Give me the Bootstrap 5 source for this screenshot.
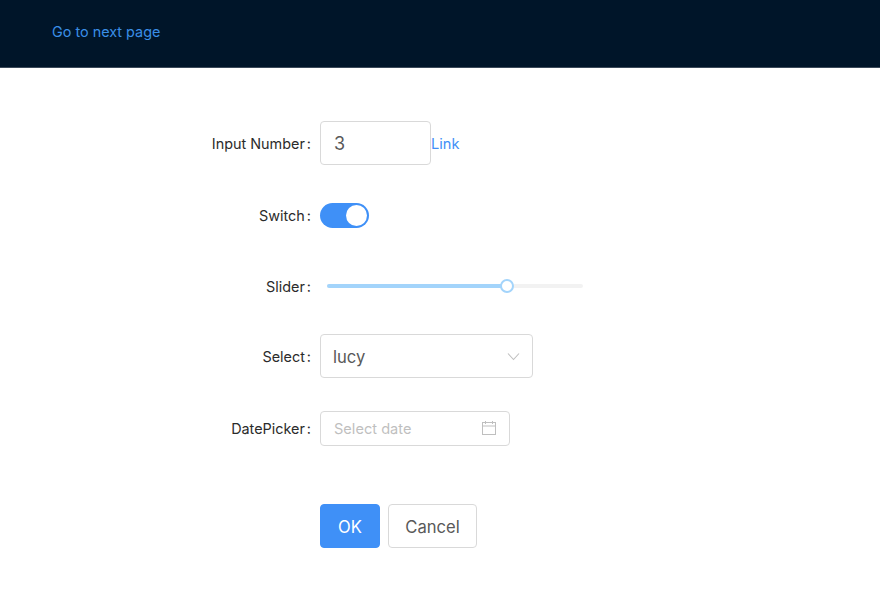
<!DOCTYPE html>
<html lang="en">
<head>
<meta charset="utf-8">
<title>Form</title>
<link href="https://cdn.jsdelivr.net/npm/bootstrap@5.3.0/dist/css/bootstrap.min.css" rel="stylesheet">
<style>
body{font-family:Inter,"Liberation Sans",sans-serif;background:#fff;color:rgba(0,0,0,.85);font-size:14px}
.top-bar{height:68px;background:#001529;padding:0 0 4px 52px;border-bottom:1px solid #3c4a5a}
.top-bar a{color:#3a8ee6;font-size:14.4px;text-decoration:none}
.form-wrap{padding-top:53px}
.f-row{height:44px}
.f-row.s1{margin-bottom:28px}
.f-row.s2{margin-bottom:27px}
.f-row.s3{margin-bottom:26px}
.f-row.s4{margin-bottom:28px}
.f-row.s5{margin-bottom:54px}
.f-label{width:320px;padding:2px 9px 0 0;text-align:right;font-size:14.4px;color:#2b2b2b;flex:none}
.f-label i{font-style:normal;margin-left:2px}
.ctl{border:1px solid #d9d9d9;border-radius:4px;background:#fff;color:#595959;padding:0 12px 0 13px}
.num-box{width:111px;height:44px;font-size:18px}
.link-txt{color:#3f8ff7;text-decoration:none;font-size:14.6px;margin-top:3px}
.sw-track{width:49px;height:25px;border-radius:13px;background:#3f90f7;position:relative;display:block}
.sw-knob{position:absolute;top:2px;right:2px;width:21px;height:21px;border-radius:50%;background:#fff}
.sl-wrap{margin-left:7px;width:256px;height:4px;background:#f2f2f2;border-radius:2px;position:relative}
.sl-fill{height:4px;background:#a3d4fb;border-radius:2px}
.sl-dot{position:absolute;top:-5px;width:14px;height:14px;border-radius:50%;background:#fff;border:2px solid #a3d4fb}
.sel-box{width:213px;height:44px;font-size:16.6px;padding-left:12px}
.sel-box span{padding-top:2px}
.date-box{width:190px;height:35px;font-size:14.6px;color:#bfbfbf;padding-right:13px}
.date-box span{padding-top:3px}
.ok-btn{width:60px;height:44px;font-size:16.6px;background:#3f90f7;border:1px solid #3f90f7;color:#fff;border-radius:4px;padding:2px 0 0}
.cancel-btn{width:89px;height:44px;font-size:16.6px;background:#fff;border:1px solid #d9d9d9;color:#595959;border-radius:4px;padding:2px 0 0}
.btn-line{padding-left:320px}
</style>
</head>
<body>
<nav class="top-bar d-flex align-items-center"><a href="#">Go to next page</a></nav>
<main class="form-wrap">
  <div class="f-row s1 d-flex align-items-center">
    <div class="f-label">Input Number<i>:</i></div>
    <div class="ctl num-box d-flex align-items-center">3</div>
    <a class="link-txt" href="#">Link</a>
  </div>
  <div class="f-row s2 d-flex align-items-center">
    <div class="f-label">Switch<i>:</i></div>
    <span class="sw-track"><span class="sw-knob"></span></span>
  </div>
  <div class="f-row s3 d-flex align-items-center">
    <div class="f-label">Slider<i>:</i></div>
    <div class="sl-wrap">
      <div class="sl-fill" style="width:70%"></div>
      <div class="sl-dot" style="left:173px"></div>
    </div>
  </div>
  <div class="f-row s4 d-flex align-items-center">
    <div class="f-label">Select<i>:</i></div>
    <div class="ctl sel-box d-flex align-items-center justify-content-between">
      <span>lucy</span>
      <svg width="13" height="13" viewBox="0 0 13 13" fill="none" stroke="#bfbfbf" stroke-width="1.1"><path d="M1 3.5 6.5 9.5 12 3.5"/></svg>
    </div>
  </div>
  <div class="f-row s5 d-flex align-items-center">
    <div class="f-label">DatePicker<i>:</i></div>
    <div class="ctl date-box d-flex align-items-center justify-content-between">
      <span>Select date</span>
      <svg width="14" height="14" viewBox="0 0 14 14" fill="none" stroke="#bfbfbf" stroke-width="1"><rect x=".5" y="1.5" width="13" height="12"/><path d="M.5 5h13M3.5 0v3M10.5 0v3"/></svg>
    </div>
  </div>
  <div class="d-flex gap-2 btn-line">
    <button type="button" class="btn ok-btn">OK</button>
    <button type="button" class="btn cancel-btn">Cancel</button>
  </div>
</main>
<script src="https://cdn.jsdelivr.net/npm/bootstrap@5.3.0/dist/js/bootstrap.bundle.min.js"></script>
</body>
</html>
